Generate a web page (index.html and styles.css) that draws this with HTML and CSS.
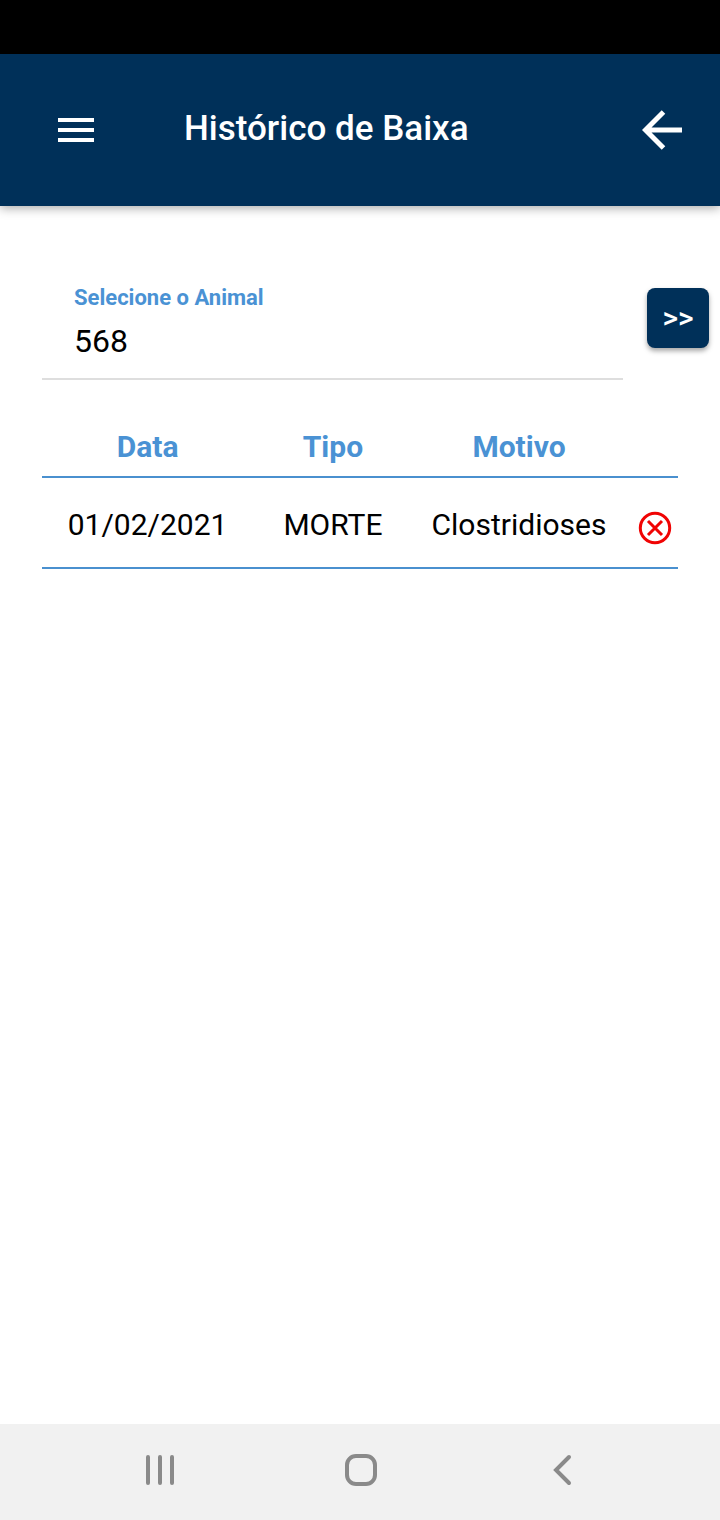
FILE: index.html
```html
<!DOCTYPE html>
<html lang="pt-BR">
<head>
  <meta charset="UTF-8" />
  <meta name="viewport" content="width=device-width, initial-scale=1.0"/>
  <title>Histórico de Baixa</title>
  <link rel="stylesheet" href="styles.css">
</head>
<body>

<div class="status-bar"></div>

<header class="toolbar">
  <button type="button" aria-label="Menu">
    <svg width="36" height="24" viewBox="0 0 36 24" fill="#fff">
      <path d="M0 0h36v4H0zM0 10h36v4H0zM0 20h36v4H0z"/>
    </svg>
  </button>
  <h1>Histórico de Baixa</h1>
  <button type="button" aria-label="Voltar">
    <svg width="40" height="40" viewBox="0 0 40 40" fill="none" stroke="#fff" stroke-width="5">
      <path d="M21.500 2L3.500 20l18 18M4 20h36"/>
    </svg>
  </button>
</header>

<main>
  <form class="busca">
    <div class="campo">
      <label for="animal">Selecione o Animal</label>
      <input type="text" id="animal" value="568" />
    </div>
    <button class="btn-buscar" type="button">&gt;&gt;</button>
  </form>

  <table class="historico">
    <thead>
      <tr>
        <th class="col-data">Data</th>
        <th class="col-tipo">Tipo</th>
        <th class="col-motivo">Motivo</th>
        <th class="col-acao"></th>
      </tr>
    </thead>
    <tbody>
      <tr>
        <td class="col-data">01/02/2021</td>
        <td>MORTE</td>
        <td>Clostridioses</td>
        <td class="col-acao">
          <button class="btn-excluir" type="button" aria-label="Excluir">
            <svg width="34" height="34" viewBox="0 0 34 34" fill="none" stroke="#f00404" stroke-width="3">
              <circle cx="17" cy="17" r="14.700"/>
              <path d="M10 10l14 14M24 10L10 24"/>
            </svg>
          </button>
        </td>
      </tr>
    </tbody>
  </table>
</main>

<!-- Barra de navegação do Android -->
<nav class="nav-bar">
  <button type="button" aria-label="Recentes">
    <svg width="32" height="32" viewBox="0 0 32 32" stroke="#8a8a8a" stroke-width="4" stroke-linecap="round">
      <path d="M4 3v26M16 3v26M28 3v26"/>
    </svg>
  </button>
  <button type="button" aria-label="Início">
    <svg width="32" height="32" viewBox="0 0 32 32" fill="none" stroke="#8a8a8a" stroke-width="4">
      <rect x="2" y="2" width="28" height="28" rx="9"/>
    </svg>
  </button>
  <button type="button" aria-label="Voltar">
    <svg width="32" height="32" viewBox="0 0 32 32" fill="none" stroke="#8a8a8a" stroke-width="4" stroke-linecap="round">
      <path d="M23 3L10 16l13 13"/>
    </svg>
  </button>
</nav>

</body>
</html>
```
FILE: styles.css
```css
* {
  box-sizing: border-box;
}
body {
  margin: 0;
  min-height: 100vh;
  display: flex;
  flex-direction: column;
  font-family: Roboto, sans-serif;
  background-color: #fff;
  color: #000;
}
button {
  border: none;
  background: none;
  padding: 0;
  font-family: inherit;
  cursor: pointer;
}
svg {
  display: block;
}
.status-bar {
  height: 54px;
  background: #000;
}
.toolbar {
  display: flex;
  align-items: center;
  height: 152px;
  padding: 0 38px 0 58px;
  background: #003059;
  box-shadow: 0 2px 10px rgba(0,0,0,0.35);
}
.toolbar h1 {
  flex: 1;
  margin: 0;
  padding: 0 0 2px 90px;
  color: #fff;
  font-size: 35px;
  font-weight: 500;
  line-height: 40px;
}
main {
  flex: 1;
  padding: 72px 42px 0;
}
.busca {
  display: flex;
  align-items: flex-start;
  gap: 24px;
  margin-right: -31px;
}
.campo {
  flex: 1;
  min-width: 0;
  height: 102px;
  padding: 6px 32px 0;
  border-bottom: 2px solid #dedede;
}
.campo label {
  display: block;
  color: #4a92d4;
  font-size: 22px;
  font-weight: bold;
  line-height: 28px;
}
.campo input {
  display: block;
  width: 100%;
  height: 44px;
  margin-top: 7px;
  padding: 0;
  border: none;
  outline: none;
  background: none;
  font-family: inherit;
  font-size: 32px;
  color: #000;
}
.btn-buscar {
  width: 62px;
  height: 60px;
  margin-top: 10px;
  padding-bottom: 2px;
  border-radius: 8px;
  background: #003059;
  color: #fff;
  font-size: 30px;
  font-weight: 500;
  box-shadow: 0 3px 5px rgba(0,0,0,0.35);
}
.historico {
  width: 100%;
  margin-top: 39px;
  table-layout: fixed;
  border-collapse: collapse;
  text-align: center;
}
.historico th, .historico td {
  padding: 0;
  border-bottom: 2px solid #4a90cf;
}
.historico th {
  height: 58px;
  padding-bottom: 2px;
  color: #4a92d4;
  font-size: 30px;
}
.historico td {
  height: 91px;
  padding-top: 4px;
  font-size: 30px;
}
.col-tipo {
  width: 29.5%;
}
.col-motivo {
  width: 29%;
}
.historico .col-data {
  width: 31%;
  padding-left: 14px;
}
.historico td.col-acao {
  padding: 10px 6px 0 0;
}
.btn-excluir {
  display: block;
  margin-left: auto;
}
.nav-bar {
  display: flex;
  align-items: center;
  justify-content: space-around;
  height: 96px;
  padding: 0 58px 4px 60px;
  background: #f1f1f1;
}
```
